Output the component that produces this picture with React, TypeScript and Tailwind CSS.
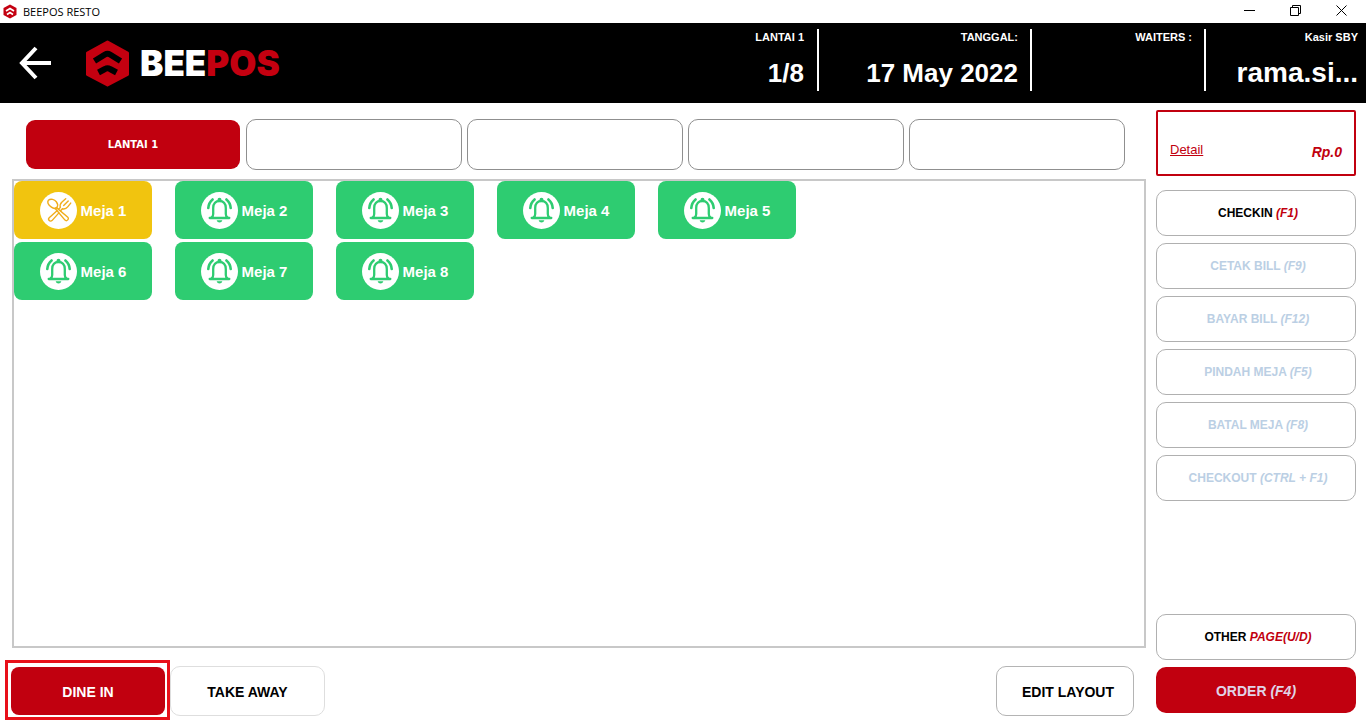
import type { ReactNode } from "react";
import clsx from "clsx";

const TABLES = [
  { id: 1, label: "Meja 1", occupied: true },
  { id: 2, label: "Meja 2", occupied: false },
  { id: 3, label: "Meja 3", occupied: false },
  { id: 4, label: "Meja 4", occupied: false },
  { id: 5, label: "Meja 5", occupied: false },
  { id: 6, label: "Meja 6", occupied: false },
  { id: 7, label: "Meja 7", occupied: false },
  { id: 8, label: "Meja 8", occupied: false },
];

const FLOORS = ["LANTAI 1", "", "", "", ""];

const ACTIONS = [
  { label: "CHECKIN", shortcut: "(F1)", enabled: true },
  { label: "CETAK BILL", shortcut: "(F9)", enabled: false },
  { label: "BAYAR BILL", shortcut: "(F12)", enabled: false },
  { label: "PINDAH MEJA", shortcut: "(F5)", enabled: false },
  { label: "BATAL MEJA", shortcut: "(F8)", enabled: false },
  { label: "CHECKOUT", shortcut: "(CTRL + F1)", enabled: false },
];

function LogoMark({ className }: { className?: string }) {
  return (
    <svg viewBox="0 0 45 47" className={className} aria-hidden="true">
      <path
        d="M22.5 2 42.5 13v21.500L22.500 45 2.500 34.500V13z"
        fill="#c40010"
        stroke="#c40010"
        strokeWidth="3"
        strokeLinejoin="round"
      />
      <g fill="none" stroke="#000" strokeWidth="6" strokeLinejoin="round">
        <path d="M9.500 21 20 14.500q2.500-1.500 5 0L35.500 21" />
        <path d="M13.500 32.500l6.500-3.500q2.500-1.500 5 0l6.500 3.500" />
      </g>
    </svg>
  );
}

function SmallLogo() {
  return (
    <svg viewBox="0 0 14 15" className="h-[15px] w-3.5" aria-hidden="true">
      <path d="M7 0.500 13.500 4v7L7 14.500 0.500 11V4z" fill="#c40010" />
      <path
        d="M3 7 7 4.500 11 7M4 10.500 7 8.500l3 2"
        fill="none"
        stroke="#fff"
        strokeWidth="1.700"
      />
    </svg>
  );
}

function BellIcon() {
  return (
    <svg viewBox="0 0 37 37" className="size-[37px]" aria-hidden="true">
      <circle cx="18.500" cy="18.500" r="18.500" fill="#fff" />
      <g fill="none" stroke="#2ecc71" strokeWidth="2.300" strokeLinecap="round">
        <path d="M8.700 26h19.600" />
        <path d="M10.500 25.500c1.300-.8 1.700-2 1.700-3.500v-6c0-4.300 2.500-7 6.300-7s6.300 2.700 6.300 7v6c0 1.500.4 2.700 1.700 3.500" />
        <path
          d="M7.300 16c.3-3.700 1.900-6.500 4.300-8.500M29.700 16c-.3-3.700-1.900-6.500-4.300-8.500"
          strokeWidth="2.600"
        />
      </g>
      <circle cx="18.500" cy="7.700" r="2" fill="#2ecc71" />
      <path d="M15.700 28.300h5.600c-.4 1.500-1.500 2.200-2.800 2.200s-2.400-.7-2.800-2.200z" fill="#2ecc71" />
    </svg>
  );
}

function UtensilsIcon() {
  return (
    <svg viewBox="0 0 37 37" className="size-[37px]" aria-hidden="true">
      <circle cx="18.500" cy="18.500" r="18.500" fill="#fff" />
      <g
        fill="none"
        stroke="#f0ad1c"
        strokeWidth="1.400"
        strokeLinecap="round"
        strokeLinejoin="round"
      >
        <path d="M8.300 8.300c2.500-2 6.200-.8 8 1.500 1.600 2 1.700 4 .7 5.600-1.500 1.300-3.700 1.200-5.600-.3-2.600-1.900-4.300-4.800-3.100-6.800z" />
        <path d="m16.500 15.600 11.300 9.600c1.800 1.600-1 4.600-2.800 2.900L15 16.300" />
        <path d="m17 18.700-7.800 7c-1.800 1.700.9 4.700 2.800 2.900l6.900-7.700" />
        <path d="m20.600 18.800 1.800-2c2.600.5 4.300-.6 5.300-1.900l3-3.800M18.700 17l1.600-1.500c-.6-2.500.4-4.300 1.700-5.500l3.700-3.300" />
        <path d="m28.200 8.900-4.500 4.600" />
      </g>
    </svg>
  );
}

function TitleBar() {
  return (
    <div className="flex h-[23px] items-center bg-white pl-[3px] font-['Open_Sans',sans-serif]">
      <SmallLogo />
      <span className="ml-1.5 text-[11px] leading-4 text-black">BEEPOS RESTO</span>
      <div className="ml-auto flex self-start pr-0.5">
        <button type="button" aria-label="Minimize" className="flex h-5 w-[46px] items-center justify-center">
          <svg viewBox="0 0 11 11" className="size-[11px]" fill="none" stroke="#000">
            <path d="M0 5.500h11" />
          </svg>
        </button>
        <button type="button" aria-label="Restore" className="flex h-5 w-[46px] items-center justify-center">
          <svg viewBox="0 0 11 11" className="size-[11px]" fill="none" stroke="#000">
            <path d="M0.500 2.500h8v8h-8zM2.500 2.500v-2h8v8h-2" />
          </svg>
        </button>
        <button type="button" aria-label="Close" className="flex h-5 w-[46px] items-center justify-center">
          <svg viewBox="0 0 11 11" className="size-[11px]" fill="none" stroke="#000">
            <path d="M0.500 0.500l10 10M10.500 0.500l-10 10" />
          </svg>
        </button>
      </div>
    </div>
  );
}

function Stat({
  label,
  children,
  className,
}: {
  label: string;
  children?: ReactNode;
  className?: string;
}) {
  return (
    <div className={clsx("flex h-[62px] flex-col text-right font-bold", className)}>
      <span className="text-[11px] leading-4">{label}</span>
      <span className="mt-3 leading-8">{children}</span>
    </div>
  );
}

function Header() {
  return (
    <header className="flex h-20 items-center bg-black text-white">
      <button type="button" aria-label="Back" className="ml-[18px]">
        <svg viewBox="0 0 34 34" className="size-[34px]" fill="none" stroke="#fff" strokeWidth="4">
          <path d="M18 2 4 17 18 32M4 17h29" />
        </svg>
      </button>
      <div className="ml-[33px] flex items-center">
        <LogoMark className="h-[47px] w-[45px]" />
        <span className="ml-2.5 font-['Inter',sans-serif] text-[35px] leading-10 font-black">
          BEE<span className="text-[#c40010]">POS</span>
        </span>
      </div>
      <div className="ml-auto flex self-start pt-1.5 pr-2">
        <Stat label="LANTAI 1" className="border-r-2 border-white pr-[13px] text-[26px]">
          1/8
        </Stat>
        <Stat label="TANGGAL:" className="w-[213px] border-r-2 border-white pr-3 text-[26px]">
          17 May 2022
        </Stat>
        <Stat label="WAITERS :" className="w-[174px] border-r-2 border-white pr-3" />
        <Stat label="Kasir SBY" className="w-[152px] text-[28px]">
          rama.si...
        </Stat>
      </div>
    </header>
  );
}

function FloorTabs() {
  return (
    <nav className="mr-[21px] ml-[25px] grid grid-cols-5 gap-[5px]">
      {FLOORS.map((floor, i) => (
        <button
          key={i}
          type="button"
          aria-label={floor || `Lantai ${i + 1}`}
          className={clsx(
            "h-[51px] rounded-[10px] border font-['DejaVu_Sans',sans-serif] text-[10px] font-bold",
            floor
              ? "border-transparent bg-[#c1000f] bg-clip-padding text-white"
              : "border-[#8f8f8f] bg-white"
          )}
        >
          {floor}
        </button>
      ))}
    </nav>
  );
}

function TableBoard() {
  return (
    <section className="mt-[9px] ml-3 flex-1 border-2 border-[#c8c8c8]">
      <div className="grid grid-cols-[repeat(5,138px)] gap-x-[23px] gap-y-[3px]">
        {TABLES.map((table) => (
          <button
            key={table.id}
            type="button"
            className={clsx(
              "flex h-[58px] items-center justify-center gap-1 rounded-lg text-[15px] font-bold text-white",
              table.occupied ? "bg-[#f1c40f]" : "bg-[#2ecc71]"
            )}
          >
            {table.occupied ? <UtensilsIcon /> : <BellIcon />}
            <span className="pt-0.5">{table.label}</span>
          </button>
        ))}
      </div>
    </section>
  );
}

function BottomBar() {
  return (
    <div className="mt-3 flex items-end pr-3 pl-[5px] text-sm font-bold text-black">
      <div className="border-3 border-[#e8101a] pt-1 pr-0.5 pb-0.5 pl-[3px]">
        <button type="button" className="block h-12 w-[154px] rounded-lg bg-[#c1000f] pt-0.5 text-white">
          DINE IN
        </button>
      </div>
      <button type="button" className="mb-1 h-[50px] w-[155px] rounded-[10px] border border-[#dedede] pt-0.5">
        TAKE AWAY
      </button>
      <button type="button" className="mb-1 ml-auto h-[50px] w-[138px] rounded-[10px] border border-[#b4b4b4] pt-0.5 pl-1.5">
        EDIT LAYOUT
      </button>
    </div>
  );
}

function SideButton({
  label,
  shortcut,
  enabled = true,
}: {
  label: string;
  shortcut: string;
  enabled?: boolean;
}) {
  return (
    <button
      type="button"
      disabled={!enabled}
      className={clsx(
        "h-[46px] rounded-[10px] border border-[#b0b0b0] bg-white pl-1 text-xs font-bold",
        enabled ? "text-black" : "text-[#bbcfe4]"
      )}
    >
      {label} <em className={clsx(enabled && "text-[#c1000f]")}>{shortcut}</em>
    </button>
  );
}

function Sidebar() {
  return (
    <aside className="mr-2.5 ml-2.5 flex w-[200px] shrink-0 flex-col pt-[7px] pb-[15px]">
      <div className="flex h-[66px] items-end justify-between rounded-xs border-2 border-[#c1000f] px-3 pb-3.5">
        <a href="#detail" className="mb-0.5 text-[13px] leading-4 text-[#c1000f] underline">
          Detail
        </a>
        <span className="text-[14px] leading-4 font-bold text-[#c1000f] italic">Rp.0</span>
      </div>
      <div className="mt-3.5 flex flex-col gap-[7px]">
        {ACTIONS.map((action) => (
          <SideButton key={action.label} {...action} />
        ))}
      </div>
      <div className="mt-auto flex flex-col gap-[7px]">
        <SideButton label="OTHER" shortcut="PAGE(U/D)" />
        <button type="button" className="h-[46px] rounded-[10px] bg-[#c1000f] pt-0.5 text-sm font-bold text-[#e0d3e6]">
          ORDER <em>(F4)</em>
        </button>
      </div>
    </aside>
  );
}

export default function App() {
  return (
    <div className="flex min-h-screen flex-col bg-white font-['Liberation_Sans',Arial,sans-serif]">
      <TitleBar />
      <Header />
      <main className="flex flex-1">
        <div className="flex flex-1 flex-col pt-4 pb-2">
          <FloorTabs />
          <TableBoard />
          <BottomBar />
        </div>
        <Sidebar />
      </main>
    </div>
  );
}
